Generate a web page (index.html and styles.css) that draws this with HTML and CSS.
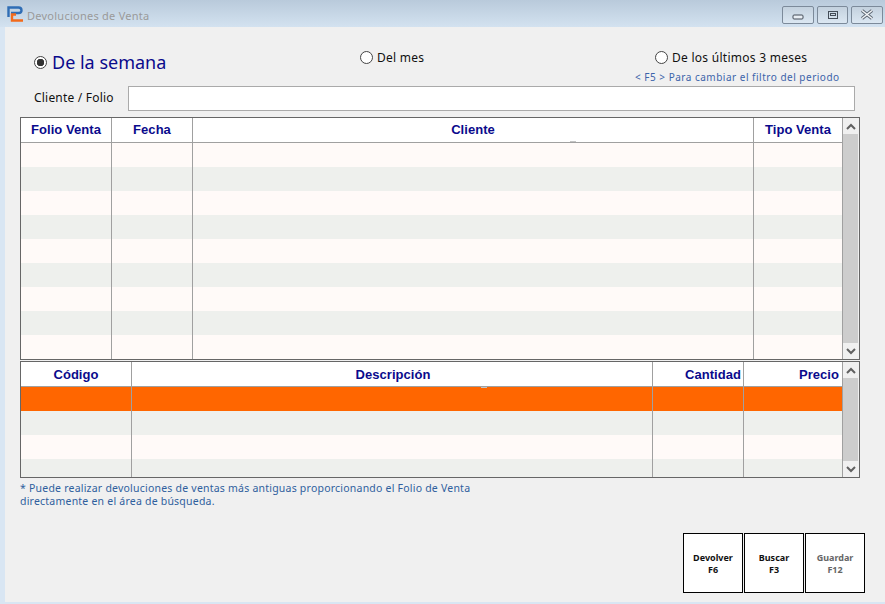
FILE: index.html
```html
<!DOCTYPE html>
<html lang="es">
<head>
<meta charset="utf-8">
<title>Devoluciones de Venta</title>
<link rel="stylesheet" href="styles.css">
</head>
<body>
<div class="titlebar">
  <svg class="logo" width="17" height="17" viewBox="0 0 17 17"><path d="M1.5 11V1.5H11.5Q14.5 1.5 14.5 4.5Q14.5 7 11.5 7H4" fill="none" stroke="#2f6db5" stroke-width="2.4"/><path d="M16 14.5H5V8.5H9" fill="none" stroke="#f26a1b" stroke-width="2.4"/></svg>
  <span class="title">Devoluciones de Venta</span>
  <div class="winbtns">
    <div class="winbtn min"><svg width="12" height="6" viewBox="0 0 12 6"><rect x="1" y="1" width="10" height="4" rx="1" fill="#e8eef4" stroke="#444d58"/></svg></div>
    <div class="winbtn max"><svg width="12" height="10" viewBox="0 0 12 10"><rect x="1.5" y="1.5" width="9" height="7" fill="none" stroke="#444d58"/><rect x="3.5" y="3.5" width="5" height="2" fill="none" stroke="#444d58"/></svg></div>
    <div class="winbtn close"><svg width="14" height="11" viewBox="0 0 14 11"><path d="M2 1.5L12 9.5M12 1.5L2 9.5" stroke="#5a6470" stroke-width="3.4" fill="none"/><path d="M2 1.5L12 9.5M12 1.5L2 9.5" stroke="#f2f5f8" stroke-width="1.6" fill="none"/></svg></div>
  </div>
</div>
<div class="main">
  <div class="filters">
    <div class="period week"><span class="radio checked"></span><span>De la semana</span></div>
    <div class="period month"><span class="radio"></span><span>Del mes</span></div>
    <div class="period-last">
      <div class="period"><span class="radio"></span><span>De los últimos 3 meses</span></div>
      <div class="hint">&lt; F5 &gt; Para cambiar el filtro del periodo</div>
    </div>
  </div>
  <div class="search">
    <label class="search-label">Cliente / Folio</label>
    <div class="search-input"></div>
  </div>
  <div class="grid">
    <div class="table sales">
      <div class="row head"><div>Folio Venta</div><div>Fecha</div><div class="speck">Cliente</div><div>Tipo Venta</div></div>
      <div class="row"><div></div><div></div><div></div><div></div></div>
      <div class="row alt"><div></div><div></div><div></div><div></div></div>
      <div class="row"><div></div><div></div><div></div><div></div></div>
      <div class="row alt"><div></div><div></div><div></div><div></div></div>
      <div class="row"><div></div><div></div><div></div><div></div></div>
      <div class="row alt"><div></div><div></div><div></div><div></div></div>
      <div class="row"><div></div><div></div><div></div><div></div></div>
      <div class="row alt"><div></div><div></div><div></div><div></div></div>
      <div class="row"><div></div><div></div><div></div><div></div></div>
    </div>
    <div class="scroll">
      <svg class="arrow" width="16" height="16" viewBox="0 0 16 16"><path d="M4 11L8 7L12 11" fill="none" stroke="#606060" stroke-width="2"/></svg>
      <div class="thumb"></div>
      <svg class="arrow" width="16" height="16" viewBox="0 0 16 16"><path d="M4 6L8 10L12 6" fill="none" stroke="#606060" stroke-width="2"/></svg>
    </div>
  </div>
  <div class="grid second">
    <div class="table items">
      <div class="row head"><div>Código</div><div class="speck desc">Descripción</div><div class="end tight">Cantidad</div><div class="end">Precio</div></div>
      <div class="row selected"><div></div><div></div><div></div><div></div></div>
      <div class="row alt"><div></div><div></div><div></div><div></div></div>
      <div class="row"><div></div><div></div><div></div><div></div></div>
      <div class="row alt last"><div></div><div></div><div></div><div></div></div>
    </div>
    <div class="scroll">
      <svg class="arrow" width="16" height="16" viewBox="0 0 16 16"><path d="M4 11L8 7L12 11" fill="none" stroke="#606060" stroke-width="2"/></svg>
      <div class="thumb"></div>
      <svg class="arrow" width="16" height="16" viewBox="0 0 16 16"><path d="M4 6L8 10L12 6" fill="none" stroke="#606060" stroke-width="2"/></svg>
    </div>
  </div>
  <p class="note">* Puede realizar devoluciones de ventas más antiguas proporcionando el Folio de Venta<br>directamente en el área de búsqueda.</p>
  <div class="actions">
    <button class="action">Devolver<br>F6</button>
    <button class="action">Buscar<br>F3</button>
    <button class="action muted">Guardar<br>F12</button>
  </div>
</div>
</body>
</html>
```
FILE: styles.css
```css
* { box-sizing: border-box; }
html, body { margin: 0; padding: 0; }
body {
  width: 885px;
  height: 604px;
  overflow: hidden;
  background: #d9e6f3;
  font-family: "Noto Sans", sans-serif;
  color: #111;
}
.titlebar {
  height: 27px;
  display: flex;
  align-items: flex-start;
  padding: 6px 2px 0 7px;
  background: linear-gradient(#b9cadb, #d3e2f0);
}
.logo { flex: none; }
.title {
  margin-left: 3px;
  margin-top: 2px;
  font-size: 11px;
  letter-spacing: 0.25px;
  color: #9a9a9a;
}
.winbtns { margin-left: auto; display: flex; gap: 3px; }
.winbtn {
  width: 32px;
  height: 18px;
  display: flex;
  align-items: center;
  justify-content: center;
  border: 1px solid #7c8a9a;
  border-radius: 2px;
  background: linear-gradient(#c3d1de, #dbe7f2);
}
.winbtn.min { padding-top: 3px; }
.winbtn.max { width: 31px; padding-bottom: 1px; }
.winbtn.close { padding-bottom: 1px; }
.main {
  margin-left: 5px;
  height: 575px;
  padding: 0 20px 0 15px;
  background: #f0f0f0;
  width: 880px;
}
.filters { display: flex; padding: 22px 0 0 14px; height: 59px; }
.period { display: flex; align-items: center; gap: 4px; font-size: 12px; letter-spacing: 0.27px; height: 17px; }
.week { width: 326px; font-size: 18px; letter-spacing: 0; color: #0a0a8c; gap: 5px; margin-top: 0; height: 26px; }
.month { width: 295px; }
.period-last { display: flex; flex-direction: column; }
.radio {
  width: 13px;
  height: 13px;
  flex: none;
  border: 1px solid #444;
  border-radius: 50%;
  background: #fff;
}
.radio.checked { background: radial-gradient(circle, #333 0 3.5px, #fff 4px); }
.hint {
  margin: 4px 0 0 -20px;
  font-size: 10px;
  letter-spacing: 0.5px;
  white-space: nowrap;
  color: #3c64aa;
}
.search { display: flex; align-items: center; height: 25px; padding-left: 14px; }
.search-label { width: 94px; font-size: 12px; letter-spacing: 0.2px; padding-bottom: 2px; }
.search-input { width: 727px; height: 25px; background: #fff; border: 1px solid #aaa; }
.grid {
  display: flex;
  width: 840px;
  margin-top: 6px;
  border: 1px solid #666;
  background: #f0f0f0;
}
.grid.second { margin-top: 1px; }
.table { flex: 1; min-width: 0; }
.row { display: grid; height: 24px; background: #fffaf8; }
.row.alt { background: #eef0ed; }
.row.selected { background: #ff6600; }
.row.last { height: 18px; }
.row > div { border-right: 1px solid #a0a0a0; }
.row > div:last-child { border-right: 0; }
.sales .row { grid-template-columns: 91px 81px 561px 88px; }
.items .row { grid-template-columns: 111px 521px 91px 98px; }
.row.head {
  height: 25px;
  background: #fff;
  border-bottom: 1px solid #a0a0a0;
  font: bold 13px "Liberation Sans", sans-serif;
  letter-spacing: 0.05px;
  color: #0a0a8c;
  line-height: 24px;
  text-align: center;
}
.items .row.head { line-height: 26px; }
.row.head .end { text-align: right; padding-right: 3px; }
.row.head .tight { padding-right: 2px; }
.row.head .desc { padding-left: 2px; }
.speck { position: relative; }
.speck::after {
  content: "";
  position: absolute;
  left: 50%;
  bottom: 0;
  width: 6px;
  height: 1px;
  background: #c4c4c4;
  margin-left: 97px;
}
.items .speck::after { margin-left: 89px; }
.scroll {
  width: 17px;
  flex: none;
  display: flex;
  flex-direction: column;
  border-left: 1px solid #a0a0a0;
  background: #f0f0f0;
}
.arrow { flex: none; display: block; }
.thumb { flex: 1; width: 15px; background: #cdcdcd; }
.note {
  margin: 4px 0 0;
  font-size: 10.5px;
  letter-spacing: 0.22px;
  line-height: 13px;
  color: #2f5f9e;
}
.actions { display: flex; justify-content: flex-end; gap: 1px; margin-top: 25px; }
.action {
  width: 60px;
  height: 60px;
  padding: 1px 0 0;
  border: 1px solid #000;
  background: #fff;
  font: bold 9px/12px "Noto Sans", sans-serif;
  color: #111;
}
.action.muted { color: #666; }
```
